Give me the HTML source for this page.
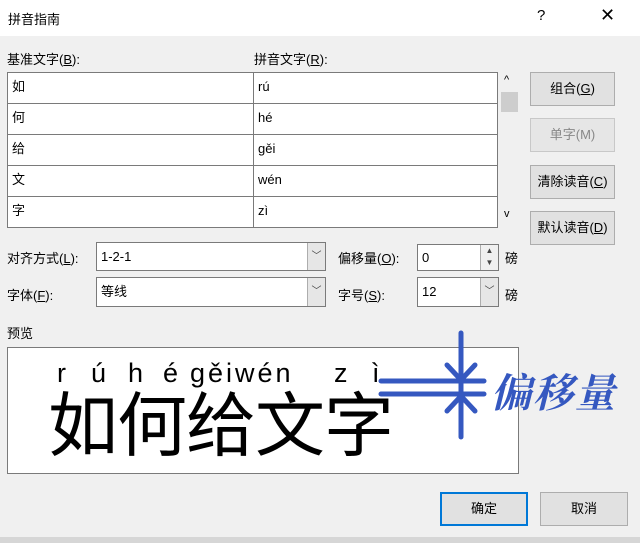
<!DOCTYPE html>
<html><head><meta charset="utf-8"><style>
*{margin:0;padding:0;box-sizing:border-box}
body{width:640px;height:543px;background:#f0f0f0;position:relative;overflow:hidden;font-family:"Liberation Sans","Noto Sans CJK SC",sans-serif;font-size:13px;color:#000}
.a{position:absolute}
.title{left:0;top:0;width:640px;height:36px;background:#fff}
.cell{position:absolute;background:#fff;border:1px solid #7a7a7a;padding-left:4px;line-height:28px;font-size:13px}
.btn{position:absolute;background:#e1e1e1;border:1px solid #adadad;text-align:center;font-size:13px}
.in{position:absolute;background:#fff;border:1px solid #7a7a7a;padding-left:4px;font-size:13px}
.dd{position:absolute;right:0;top:0;bottom:0;width:18px;background:#e6e6e6;border-left:1px solid #adadad;text-align:center;font-size:10px;color:#444}
u{text-decoration:underline}
.p{position:absolute;top:356px;font-size:27px;line-height:34px}
</style></head><body>
<div class="a title"></div>
<div class="a" style="left:8px;top:9px;font-size:13px">拼音指南</div>
<div class="a" style="left:537px;top:7px;font-size:15px">?</div>
<div class="a" style="left:600px;top:5px;font-size:18px;font-weight:300">✕</div>

<div class="a" style="left:7px;top:49px">基准文字(<u>B</u>):</div>
<div class="a" style="left:254px;top:49px">拼音文字(<u>R</u>):</div>

<div class="cell" style="left:7px;top:72px;width:247px;height:32px">如</div>
<div class="cell" style="left:253px;top:72px;width:245px;height:32px">rú</div>
<div class="cell" style="left:7px;top:103px;width:247px;height:32px">何</div>
<div class="cell" style="left:253px;top:103px;width:245px;height:32px">hé</div>
<div class="cell" style="left:7px;top:134px;width:247px;height:32px">给</div>
<div class="cell" style="left:253px;top:134px;width:245px;height:32px">gěi</div>
<div class="cell" style="left:7px;top:165px;width:247px;height:32px">文</div>
<div class="cell" style="left:253px;top:165px;width:245px;height:32px">wén</div>
<div class="cell" style="left:7px;top:196px;width:247px;height:32px">字</div>
<div class="cell" style="left:253px;top:196px;width:245px;height:32px">zì</div>

<div class="a" style="left:504px;top:74px;font-size:11px">^</div>
<div class="a" style="left:501px;top:92px;width:17px;height:20px;background:#cdcdcd"></div>
<div class="a" style="left:504px;top:208px;font-size:11px">v</div>

<div class="btn" style="left:530px;top:72px;width:85px;height:34px;line-height:32px">组合(<u>G</u>)</div>
<div class="btn" style="left:530px;top:118px;width:85px;height:34px;line-height:32px;color:#888;background:#e6e6e6;border-color:#c8c8c8">单字(M)</div>
<div class="btn" style="left:530px;top:165px;width:85px;height:34px;line-height:32px">清除读音(<u>C</u>)</div>
<div class="btn" style="left:530px;top:211px;width:85px;height:34px;line-height:32px">默认读音(<u>D</u>)</div>

<div class="a" style="left:7px;top:248px">对齐方式(<u>L</u>):</div>
<div class="in" style="left:96px;top:242px;width:230px;height:29px;line-height:27px">1-2-1<div class="dd">﹀</div></div>
<div class="a" style="left:338px;top:248px">偏移量(<u>O</u>):</div>
<div class="in" style="left:417px;top:244px;width:82px;height:27px;line-height:25px">0<div class="dd" style="background:#f0f0f0;font-size:8px;line-height:12px">▲<br>▼</div></div>
<div class="a" style="left:505px;top:248px">磅</div>

<div class="a" style="left:7px;top:285px">字体(<u>F</u>):</div>
<div class="in" style="left:96px;top:277px;width:230px;height:30px;line-height:28px">等线<div class="dd">﹀</div></div>
<div class="a" style="left:338px;top:285px">字号(<u>S</u>):</div>
<div class="in" style="left:417px;top:277px;width:82px;height:30px;line-height:28px">12<div class="dd">﹀</div></div>
<div class="a" style="left:505px;top:285px">磅</div>

<div class="a" style="left:7px;top:323px">预览</div>
<div class="a" style="left:7px;top:347px;width:512px;height:127px;background:#fff;border:1px solid #7a7a7a"></div>
<span class="p" style="left:57px">r</span>
<span class="p" style="left:91px">ú</span>
<span class="p" style="left:128px">h</span>
<span class="p" style="left:163px">é</span>
<span class="p" style="left:190px;letter-spacing:3px">gěiwén</span>
<span class="p" style="left:334px">z</span>
<span class="p" style="left:372px">ì</span>
<div class="a" style="left:48px;top:384px;font-size:70px;line-height:84px;letter-spacing:-1px">如何给文字</div>

<svg class="a" style="left:0;top:0" width="640" height="543">
<g stroke="#3558c0" stroke-width="5" stroke-linecap="round" fill="none">
<line x1="461" y1="333" x2="461" y2="437"/>
<line x1="381" y1="381" x2="484" y2="381"/>
<line x1="381" y1="394" x2="484" y2="394"/>
<polyline points="447,365 461,380 475,365"/>
<polyline points="447,411 461,396 475,411"/>
</g>
</svg>
<div class="a" style="left:491px;top:362px;font-size:40px;color:#3558c0;font-style:italic;font-weight:bold;letter-spacing:2px;font-family:'Noto Serif CJK SC',serif">偏移量</div>

<div class="btn" style="left:440px;top:492px;width:88px;height:34px;line-height:30px;border:2px solid #0078d7">确定</div>
<div class="btn" style="left:540px;top:492px;width:88px;height:34px;line-height:32px">取消</div>
<div class="a" style="left:0;top:537px;width:640px;height:6px;background:#d6d6d6"></div>
</body></html>
